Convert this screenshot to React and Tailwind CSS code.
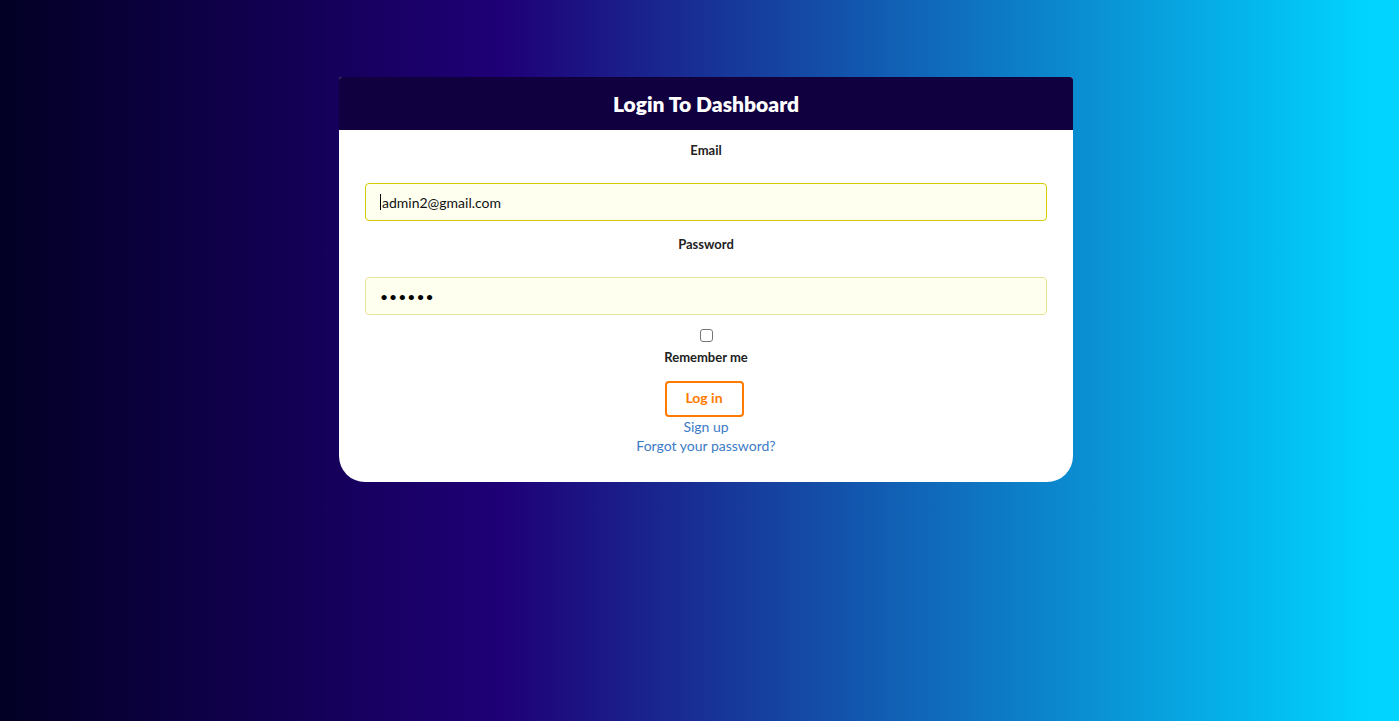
export default function App() {
  return (
    <div
      className="w-full h-[721px] bg-[linear-gradient(90deg,#020024_0%,#1f0077_36%,#00d4ff_98%)] pt-[77px]"
      style={{ fontFamily: "Lato, 'Open Sans', sans-serif" }}
    >
      <div className="ml-[339px] w-[734px] bg-white rounded-t-[3px] rounded-b-[26px] overflow-hidden">
        <div className="h-[53px] bg-[#11003f] flex items-center justify-center">
          <h1 className="text-white font-extrabold text-[21px] leading-none">Login To Dashboard</h1>
        </div>
        <div className="px-[26px] pt-[10px] pb-[27px] flex flex-col items-center">
          <label className="h-[20px] leading-[20px] text-[13px] font-bold text-[#222]">Email</label>
          <div className="mt-[23px] w-full h-[38px] rounded-[4px] border border-[#d6cb00] bg-[#fffff0] flex items-center pl-[14px] text-[14px] text-[#111]">
            <span className="w-px h-[16px] bg-black mr-[1px]"></span>admin2@gmail.com
          </div>
          <label className="mt-[13px] h-[20px] leading-[20px] text-[13px] font-bold text-[#222]">Password</label>
          <div className="mt-[23px] w-full h-[38px] rounded-[4px] border border-[#e8e39a] bg-[#fffff0] flex items-center pl-[14px] text-[14px] text-black tracking-[1px]">
            ••••••
          </div>
          <div className="mt-[14px] w-[13px] h-[13px] rounded-[3px] border border-[#767676] bg-white"></div>
          <div className="mt-[5px] h-[20px] leading-[20px] text-[13px] font-bold text-[#222]">Remember me</div>
          <button className="mt-[14px] mr-[4px] w-[79px] h-[36px] rounded-[4px] border-2 border-[#ff7a00] text-[#ff7a00] font-bold text-[14px] leading-none pb-[3px] bg-white">
            Log in
          </button>
          <a className="h-[19px] leading-[19px] text-[14px] text-[#3c7bc6]">Sign up</a>
          <a className="h-[19px] leading-[19px] text-[14px] text-[#3c7bc6]">Forgot your password?</a>
        </div>
      </div>
    </div>
  );
}
